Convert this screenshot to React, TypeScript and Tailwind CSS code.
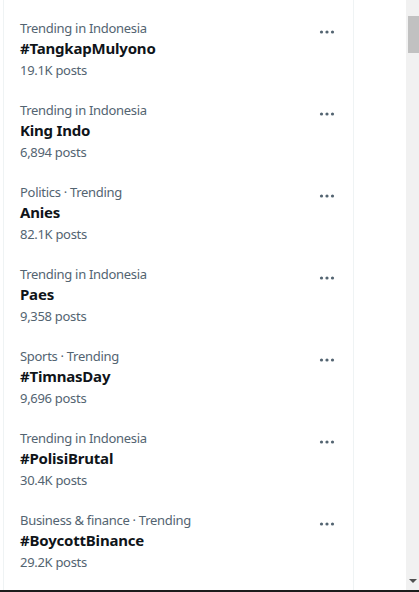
import React from "react"

const trends = [
  { cat: "Trending in Indonesia", title: "#TangkapMulyono", posts: "19.1K posts" },
  { cat: "Trending in Indonesia", title: "King Indo", posts: "6,894 posts" },
  { cat: "Politics · Trending", title: "Anies", posts: "82.1K posts" },
  { cat: "Trending in Indonesia", title: "Paes", posts: "9,358 posts" },
  { cat: "Sports · Trending", title: "#TimnasDay", posts: "9,696 posts" },
  { cat: "Trending in Indonesia", title: "#PolisiBrutal", posts: "30.4K posts" },
  { cat: "Business & finance · Trending", title: "#BoycottBinance", posts: "29.2K posts" },
]

function Dots() {
  return (
    <svg width="18" height="18" viewBox="0 0 18 18" className="text-[#536471]">
      <circle cx="3.5" cy="9" r="1.6" fill="currentColor" />
      <circle cx="9" cy="9" r="1.6" fill="currentColor" />
      <circle cx="14.5" cy="9" r="1.6" fill="currentColor" />
    </svg>
  )
}

export default function App() {
  return (
    <div
      className="w-[419px] h-[592px] bg-white flex flex-col overflow-hidden"
      style={{ fontFamily: '"Segoe UI", "Noto Sans", sans-serif' }}
    >
      <div className="flex flex-1 min-h-0">
        <div className="pl-[3px]">
          <div className="w-[351px] h-full border-x border-[#eff3f4] pt-2">
            {trends.map((t, i) => (
              <div key={i} className="flex justify-between px-4 py-3">
                <div className="flex flex-col">
                  <span className="text-[13px] leading-4 tracking-[-0.3px] text-[#536471]">{t.cat}</span>
                  <span className="text-[15px] leading-5 tracking-[-0.2px] font-bold text-[#0f1419] mt-0.5">{t.title}</span>
                  <span className="text-[13px] leading-4 tracking-[-0.3px] text-[#536471] mt-1">{t.posts}</span>
                </div>
                <div className="mr-[1px] mt-[3px]">
                  <Dots />
                </div>
              </div>
            ))}
          </div>
        </div>
        <div className="flex-1" />
        <div className="w-[13px] bg-[#f1f1f1] flex flex-col justify-between items-end">
          <div className="mt-4 w-[11px] h-[37px] bg-[#c1c1c1]" />
          <div className="mb-[7px] mr-[2px] w-0 h-0 border-x-[4px] border-x-transparent border-t-[4px] border-t-[#505050]" />
        </div>
      </div>
      <div className="h-[2px] bg-[#1c1c1c]" />
    </div>
  )
}
